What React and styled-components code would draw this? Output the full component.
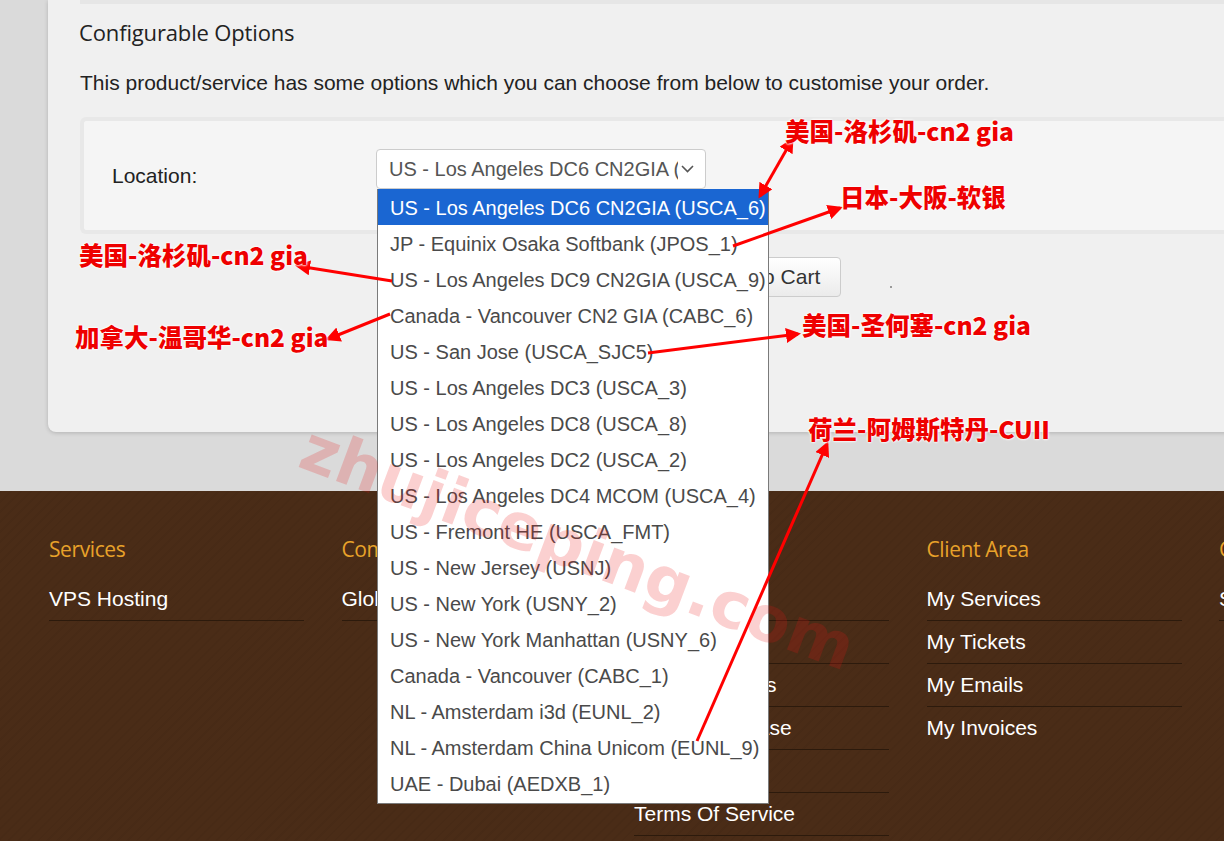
import React from "react"
import styled, { createGlobalStyle } from "styled-components"

const GlobalStyle = createGlobalStyle`
    html, body {
        margin: 0;
        padding: 0;
        background: #dadada;
        overflow: hidden;
    }
    body {
        font-family: "Liberation Sans", Arial, sans-serif;
    }
`

const Page = styled.div`
    position: relative;
    width: 1224px;
    height: 841px;
    overflow: hidden;
`

const Main = styled.div`
    padding: 0 0 59px 48px;
`

const Card = styled.div`
    background-color: #f0f0f0;
    width: 1240px;
    padding: 0 0 135px 32px;
    border-radius: 0 0 0 8px;
    box-shadow: 0 1px 4px rgba(0, 0, 0, 0.18);
`

const TopStrip = styled.div`
    height: 4px;
    background-color: #e6e6e6;
`

const Title = styled.h3`
    font-family: "Open Sans", sans-serif;
    font-weight: 400;
    font-size: 22px;
    letter-spacing: -0.15px;
    line-height: 28px;
    color: #222;
    margin: 14px 0 0 -1px;
`

const Lead = styled.p`
    font-size: 21px;
    line-height: 29px;
    color: #222;
    margin: 22px 0 0 0;
`

const OptionsBox = styled.div`
    margin-top: 20px;
    border: 4px solid #e8e8e8;
    border-right: none;
    border-radius: 6px 0 0 6px;
    background-color: #f5f5f5;
    display: flex;
    align-items: flex-start;
    padding: 28px 0 40px 28px;
`

const Label = styled.label`
    width: 264px;
    font-size: 21px;
    line-height: 29px;
    color: #222;
    margin-top: 12px;
`

const SelectWrap = styled.div`
    position: relative;
`

const Select = styled.div`
    box-sizing: border-box;
    width: 330px;
    height: 40px;
    display: flex;
    align-items: center;
    justify-content: space-between;
    padding: 0 11px 0 12px;
    background: #fff;
    border: 1px solid #ccc;
    border-radius: 4px;
    font-size: 20px;
    color: #555;
`

const SelectText = styled.span`
    white-space: nowrap;
    overflow: hidden;
    width: 289px;
`

const Menu = styled.ul`
    position: absolute;
    z-index: 3;
    top: 100%;
    left: 1px;
    width: 392px;
    box-sizing: border-box;
    margin: 0;
    padding: 0 0 2px 0;
    list-style: none;
    background: #fff;
    border: 1px solid #7a7a7a;
    border-top: none;
`

const Option = styled.li`
    height: 36px;
    line-height: 38px;
    padding-left: 12px;
    font-size: 20px;
    white-space: nowrap;
    color: ${p => (p.$active ? "#fff" : "#4a4a4a")};
    background: ${p => (p.$active ? "#1a66d2" : "transparent")};
`

const ButtonRow = styled.div`
    display: flex;
    align-items: center;
    margin-top: 23px;
    padding-left: 613px;
`

const CartButton = styled.button`
    height: 40px;
    padding: 0 20px;
    font-family: "Liberation Sans", Arial, sans-serif;
    font-size: 21px;
    color: #333;
    background: linear-gradient(#ffffff, #ebebeb);
    border: 1px solid #ccc;
    border-radius: 4px;
`

const Dot = styled.span`
    width: 2px;
    height: 2px;
    margin: 20px 0 0 49px;
    background: #9a9a9a;
`

const Footer = styled.footer`
    height: 360px;
    padding: 44px 0 0 49px;
    background-color: #4a2c17;
    background-image: repeating-linear-gradient(
        135deg,
        rgba(0, 0, 0, 0.035) 0 2px,
        transparent 2px 7px
    );
    display: grid;
    grid-template-columns: repeat(5, 255px);
    column-gap: 37.5px;
    align-items: start;
`

const Column = styled.div``

const ColumnTitle = styled.h4`
    font-family: "Open Sans", sans-serif;
    font-weight: 400;
    font-size: 21px;
    letter-spacing: -0.4px;
    line-height: 28px;
    color: #e8a22a;
    margin: 0 0 15px 0;
`

const FooterLink = styled.div`
    height: 42px;
    line-height: 42px;
    font-size: 21px;
    color: #fff;
    white-space: nowrap;
    border-bottom: 1px solid ${p => (p.$noLine ? "transparent" : "#2c1a0c")};
`

const Overlay = styled.svg`
    position: absolute;
    inset: 0;
    z-index: 10;
    pointer-events: none;
`

const Note = styled.div`
    position: absolute;
    z-index: 11;
    transform: translateY(-50%);
    font-family: "Noto Sans CJK SC", "Noto Sans", sans-serif;
    font-weight: 900;
    font-size: 24.5px;
    line-height: 1;
    white-space: nowrap;
    color: #ee0000;
    text-shadow: 0 0 2px #fff, 0 0 2px #fff, 0 0 3px #fff;
`

const Watermark = styled.div`
    position: absolute;
    z-index: 6;
    left: 578px;
    top: 548px;
    transform: translate(-50%, -50%) rotate(20.5deg);
    font-family: "DejaVu Sans", sans-serif;
    font-weight: 700;
    font-size: 64px;
    white-space: nowrap;
    color: rgba(235, 20, 20, 0.2);
    pointer-events: none;
`

const locations = [
    "US - Los Angeles DC6 CN2GIA (USCA_6)",
    "JP - Equinix Osaka Softbank (JPOS_1)",
    "US - Los Angeles DC9 CN2GIA (USCA_9)",
    "Canada - Vancouver CN2 GIA (CABC_6)",
    "US - San Jose (USCA_SJC5)",
    "US - Los Angeles DC3 (USCA_3)",
    "US - Los Angeles DC8 (USCA_8)",
    "US - Los Angeles DC2 (USCA_2)",
    "US - Los Angeles DC4 MCOM (USCA_4)",
    "US - Fremont HE (USCA_FMT)",
    "US - New Jersey (USNJ)",
    "US - New York (USNY_2)",
    "US - New York Manhattan (USNY_6)",
    "Canada - Vancouver (CABC_1)",
    "NL - Amsterdam i3d (EUNL_2)",
    "NL - Amsterdam China Unicom (EUNL_9)",
    "UAE - Dubai (AEDXB_1)",
]

const footerCols = [
    { title: "Services", links: ["VPS Hosting"] },
    { title: "Company", links: ["Global Network"] },
    { title: "Support", links: ["Contact Us", "Submit Ticket", "Network Status", "Knowledge Base", "Downloads", "Terms Of Service"] },
    { title: "Client Area", links: ["My Services", "My Tickets", "My Emails", "My Invoices"], lastNoLine: true },
    { title: "Contact", links: ["Sales"] },
]

const notes = [
    { text: "美国-洛杉矶-cn2 gia", x: 785, y: 131 },
    { text: "日本-大阪-软银", x: 840, y: 197 },
    { text: "美国-洛杉矶-cn2 gia", x: 79, y: 255 },
    { text: "加拿大-温哥华-cn2 gia", x: 75, y: 337 },
    { text: "美国-圣何塞-cn2 gia", x: 802, y: 325 },
    { text: "荷兰-阿姆斯特丹-CUII", x: 808, y: 429 },
]

const arrows = [
    { x1: 760, y1: 196, x2: 792, y2: 140, both: true },
    { x1: 733, y1: 246, x2: 840, y2: 208 },
    { x1: 392, y1: 281, x2: 298, y2: 266 },
    { x1: 390, y1: 314, x2: 328, y2: 339 },
    { x1: 648, y1: 353, x2: 798, y2: 334 },
    { x1: 697, y1: 741, x2: 827, y2: 444 },
]

function App() {
    return (
        <Page>
            <GlobalStyle />
            <Main>
                <Card>
                    <TopStrip />
                    <Title>Configurable Options</Title>
                    <Lead>This product/service has some options which you can choose from below to customise your order.</Lead>
                    <OptionsBox>
                        <Label>Location:</Label>
                        <SelectWrap>
                            <Select>
                                <SelectText>US - Los Angeles DC6 CN2GIA (</SelectText>
                                <svg width="13" height="8" viewBox="0 0 13 8">
                                    <polyline points="1,1 6.5,6.5 12,1" fill="none" stroke="#555" strokeWidth="1.6" />
                                </svg>
                            </Select>
                            <Menu>
                                {locations.map((l, i) => (
                                    <Option key={l} $active={i === 0}>{l}</Option>
                                ))}
                            </Menu>
                        </SelectWrap>
                    </OptionsBox>
                    <ButtonRow>
                        <CartButton>Add to Cart</CartButton>
                        <Dot />
                    </ButtonRow>
                </Card>
            </Main>
            <Footer>
                {footerCols.map(col => (
                    <Column key={col.title}>
                        <ColumnTitle>{col.title}</ColumnTitle>
                        {col.links.map((link, i) => (
                            <FooterLink key={link} $noLine={col.lastNoLine && i === col.links.length - 1}>
                                {link}
                            </FooterLink>
                        ))}
                    </Column>
                ))}
            </Footer>

            <Watermark>zhujiceping.com</Watermark>

            <Overlay width="1224" height="841" viewBox="0 0 1224 841">
                <defs>
                    <marker id="head" viewBox="0 0 10 10" refX="8" refY="5" markerWidth="5" markerHeight="5" orient="auto-start-reverse">
                        <path d="M0,0 L10,5 L0,10 z" fill="#f00" />
                    </marker>
                </defs>
                {arrows.map((a, i) => (
                    <line
                        key={i}
                        x1={a.x1}
                        y1={a.y1}
                        x2={a.x2}
                        y2={a.y2}
                        stroke="#f00"
                        strokeWidth="3"
                        markerEnd="url(#head)"
                        markerStart={a.both ? "url(#head)" : undefined}
                    />
                ))}
            </Overlay>
            {notes.map((n, i) => (
                <Note key={i} style={{ left: n.x, top: n.y }}>{n.text}</Note>
            ))}
        </Page>
    )
}

export default App
